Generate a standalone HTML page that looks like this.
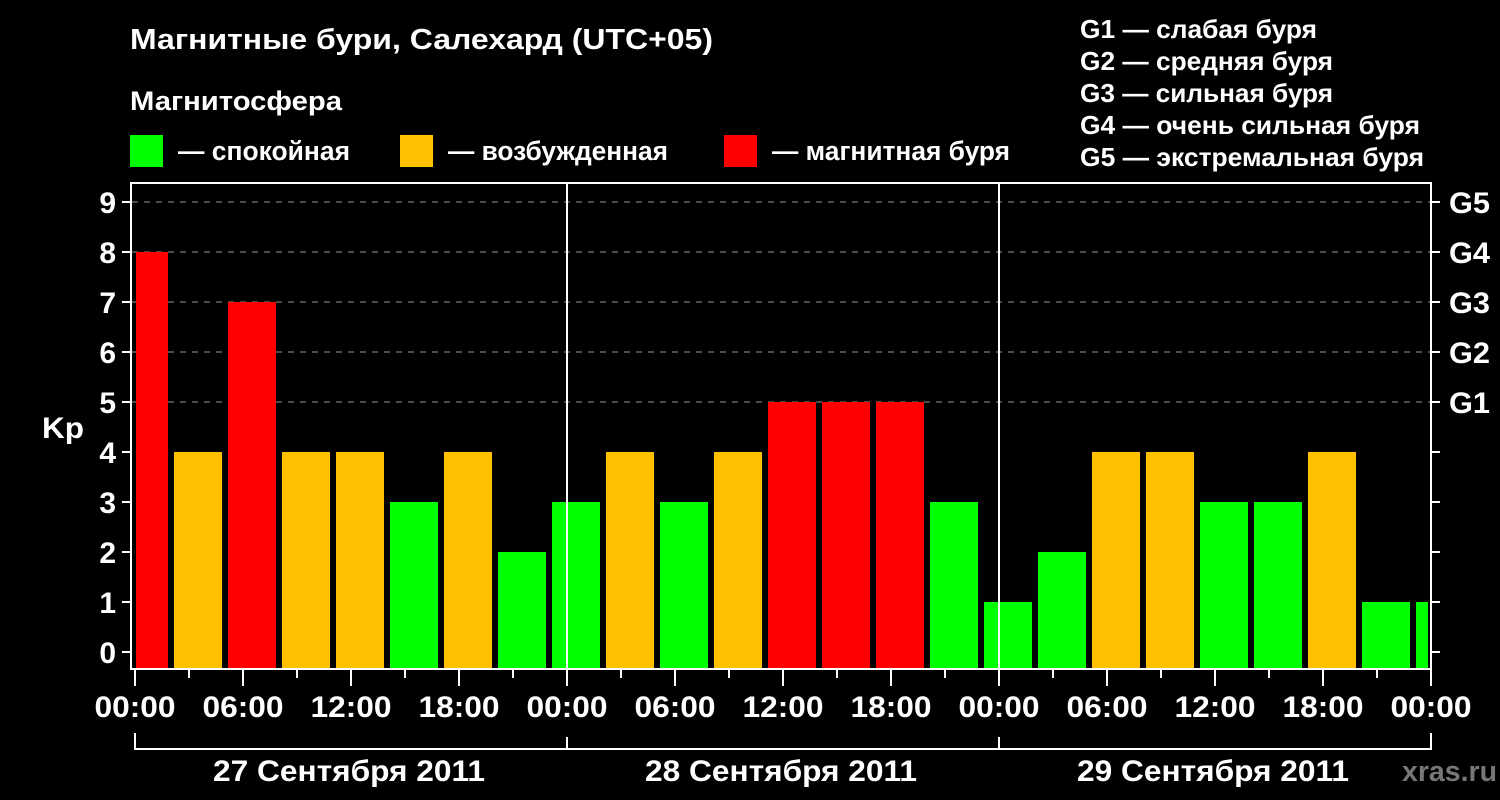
<!DOCTYPE html>
<html><head><meta charset="utf-8"><style>
html,body{margin:0;padding:0;background:#000;width:1500px;height:800px;overflow:hidden}
svg{display:block}
text{font-family:"Liberation Sans",Arial,sans-serif;font-weight:bold;fill:#fff}
</style></head><body>
<svg width="1500" height="800" viewBox="0 0 1500 800">
<rect width="1500" height="800" fill="#000"/>
<text x="130" y="49" font-size="29" textLength="583" lengthAdjust="spacingAndGlyphs">Магнитные бури, Салехард (UTC+05)</text>
<text x="130" y="110" font-size="27" textLength="212" lengthAdjust="spacingAndGlyphs">Магнитосфера</text>
<rect x="130" y="135" width="33" height="32" fill="#00ff00"/>
<text x="178" y="160" font-size="27" textLength="172" lengthAdjust="spacingAndGlyphs">— спокойная</text>
<rect x="400" y="135" width="33" height="32" fill="#ffc000"/>
<text x="448" y="160" font-size="27" textLength="220" lengthAdjust="spacingAndGlyphs">— возбужденная</text>
<rect x="724" y="135" width="33" height="32" fill="#ff0000"/>
<text x="772" y="160" font-size="27" textLength="238" lengthAdjust="spacingAndGlyphs">— магнитная буря</text>
<g font-size="26">
<text x="1080" y="38" textLength="237" lengthAdjust="spacingAndGlyphs">G1 — слабая буря</text>
<text x="1080" y="70" textLength="253" lengthAdjust="spacingAndGlyphs">G2 — средняя буря</text>
<text x="1080" y="102" textLength="253" lengthAdjust="spacingAndGlyphs">G3 — сильная буря</text>
<text x="1080" y="134" textLength="340" lengthAdjust="spacingAndGlyphs">G4 — очень сильная буря</text>
<text x="1080" y="166" textLength="344" lengthAdjust="spacingAndGlyphs">G5 — экстремальная буря</text>
</g>
<g stroke="#999" stroke-width="1" stroke-dasharray="6,6">
<line x1="132" y1="202" x2="1431" y2="202"/><line x1="132" y1="252" x2="1431" y2="252"/>
<line x1="132" y1="302" x2="1431" y2="302"/><line x1="132" y1="352" x2="1431" y2="352"/>
<line x1="132" y1="402" x2="1431" y2="402"/>
</g>
<g>
<rect x="136" y="252" width="32" height="416" fill="#f00"/>
<rect x="174" y="452" width="48" height="216" fill="#ffc000"/>
<rect x="228" y="302" width="48" height="366" fill="#f00"/>
<rect x="282" y="452" width="48" height="216" fill="#ffc000"/>
<rect x="336" y="452" width="48" height="216" fill="#ffc000"/>
<rect x="390" y="502" width="48" height="166" fill="#0f0"/>
<rect x="444" y="452" width="48" height="216" fill="#ffc000"/>
<rect x="498" y="552" width="48" height="116" fill="#0f0"/>
<rect x="552" y="502" width="48" height="166" fill="#0f0"/>
<rect x="606" y="452" width="48" height="216" fill="#ffc000"/>
<rect x="660" y="502" width="48" height="166" fill="#0f0"/>
<rect x="714" y="452" width="48" height="216" fill="#ffc000"/>
<rect x="768" y="402" width="48" height="266" fill="#f00"/>
<rect x="822" y="402" width="48" height="266" fill="#f00"/>
<rect x="876" y="402" width="48" height="266" fill="#f00"/>
<rect x="930" y="502" width="48" height="166" fill="#0f0"/>
<rect x="984" y="602" width="48" height="66" fill="#0f0"/>
<rect x="1038" y="552" width="48" height="116" fill="#0f0"/>
<rect x="1092" y="452" width="48" height="216" fill="#ffc000"/>
<rect x="1146" y="452" width="48" height="216" fill="#ffc000"/>
<rect x="1200" y="502" width="48" height="166" fill="#0f0"/>
<rect x="1254" y="502" width="48" height="166" fill="#0f0"/>
<rect x="1308" y="452" width="48" height="216" fill="#ffc000"/>
<rect x="1362" y="602" width="48" height="66" fill="#0f0"/>
<rect x="1416" y="602" width="12" height="66" fill="#0f0"/>
</g>
<g stroke="#fff" stroke-width="2" fill="none">
<rect x="131" y="183" width="1300" height="486"/>
<line x1="567" y1="183" x2="567" y2="668"/>
<line x1="999" y1="183" x2="999" y2="668"/>
<path d="M122 202h9M122 252h9M122 302h9M122 352h9M122 402h9M122 452h9M122 502h9M122 552h9M122 602h9M122 652h9"/>
<path d="M1431 202h9M1431 252h9M1431 302h9M1431 352h9M1431 402h9M1431 452h9M1431 502h9M1431 552h9M1431 602h9M1431 652h9"/>
<path d="M135 669v17M189 669v9M243 669v17M297 669v9M351 669v17M405 669v9M459 669v17M513 669v9M567 669v17M621 669v9M675 669v17M729 669v9M783 669v17M837 669v9M891 669v17M945 669v9M999 669v17M1053 669v9M1107 669v17M1161 669v9M1215 669v17M1269 669v9M1323 669v17M1377 669v9M1431 669v17"/>
<path d="M135 733v16h1296v-16M567 749v-12M999 749v-12"/>
</g>
<g font-size="30" text-anchor="end">
<text x="116" y="213">9</text><text x="116" y="263">8</text><text x="116" y="313">7</text>
<text x="116" y="363">6</text><text x="116" y="413">5</text><text x="116" y="463">4</text>
<text x="116" y="513">3</text><text x="116" y="563">2</text><text x="116" y="613">1</text>
<text x="116" y="663">0</text>
</g>
<text x="42" y="438" font-size="30" textLength="42" lengthAdjust="spacingAndGlyphs">Kp</text>
<g font-size="30">
<text x="1449" y="213" textLength="41" lengthAdjust="spacingAndGlyphs">G5</text><text x="1449" y="263" textLength="41" lengthAdjust="spacingAndGlyphs">G4</text><text x="1449" y="313" textLength="41" lengthAdjust="spacingAndGlyphs">G3</text>
<text x="1449" y="363" textLength="41" lengthAdjust="spacingAndGlyphs">G2</text><text x="1449" y="413" textLength="41" lengthAdjust="spacingAndGlyphs">G1</text>
</g>
<g font-size="30" text-anchor="middle">
<text x="135" y="717" textLength="81" lengthAdjust="spacingAndGlyphs">00:00</text><text x="243" y="717" textLength="81" lengthAdjust="spacingAndGlyphs">06:00</text><text x="351" y="717" textLength="81" lengthAdjust="spacingAndGlyphs">12:00</text><text x="459" y="717" textLength="81" lengthAdjust="spacingAndGlyphs">18:00</text>
<text x="567" y="717" textLength="81" lengthAdjust="spacingAndGlyphs">00:00</text><text x="675" y="717" textLength="81" lengthAdjust="spacingAndGlyphs">06:00</text><text x="783" y="717" textLength="81" lengthAdjust="spacingAndGlyphs">12:00</text><text x="891" y="717" textLength="81" lengthAdjust="spacingAndGlyphs">18:00</text>
<text x="999" y="717" textLength="81" lengthAdjust="spacingAndGlyphs">00:00</text><text x="1107" y="717" textLength="81" lengthAdjust="spacingAndGlyphs">06:00</text><text x="1215" y="717" textLength="81" lengthAdjust="spacingAndGlyphs">12:00</text><text x="1323" y="717" textLength="81" lengthAdjust="spacingAndGlyphs">18:00</text>
<text x="1431" y="717" textLength="81" lengthAdjust="spacingAndGlyphs">00:00</text>
<text x="349" y="781" textLength="272" lengthAdjust="spacingAndGlyphs">27 Сентября 2011</text>
<text x="781" y="781" textLength="272" lengthAdjust="spacingAndGlyphs">28 Сентября 2011</text>
<text x="1213" y="781" textLength="272" lengthAdjust="spacingAndGlyphs">29 Сентября 2011</text>
</g>
<text x="1402" y="781" font-size="29" textLength="95" lengthAdjust="spacingAndGlyphs" style="fill:#777">xras.ru</text>
</svg>
</body></html>
